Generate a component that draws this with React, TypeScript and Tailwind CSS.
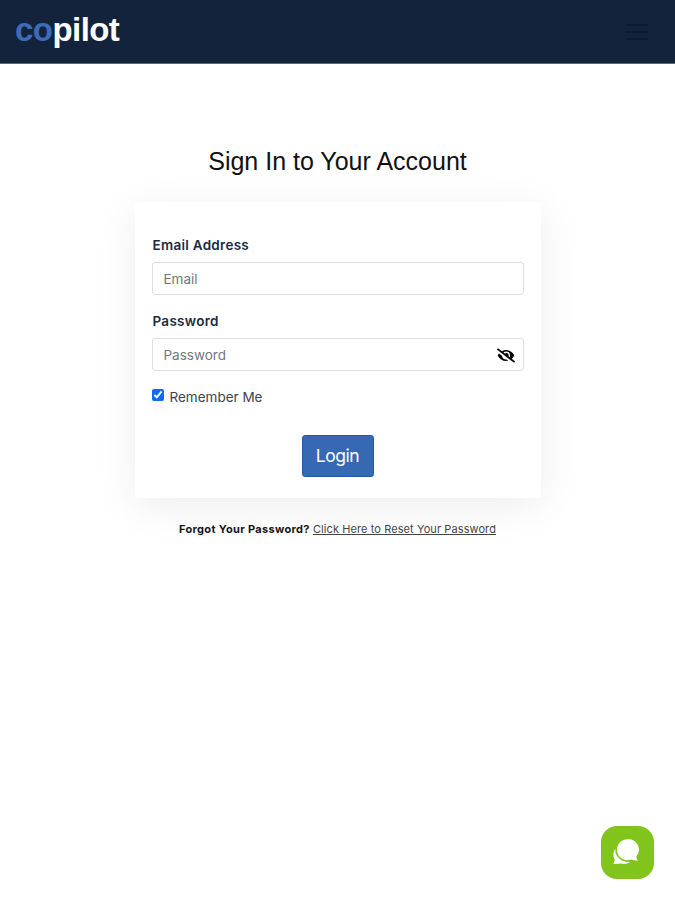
import React, { useState } from 'react';
import { FaEyeSlash } from 'react-icons/fa';

const Header: React.FC = () => (
  <header className="h-16 bg-[#14233c] border-b border-[#5d6878] pl-[15px] pr-[27px] flex items-center justify-between">
    <a
      href="#"
      className="font-['Liberation_Sans',Arial,sans-serif] text-[33px] leading-8 font-bold tracking-[-0.55px] text-white -mt-[3px]"
    >
      <span className="text-[#3d6bb8]">co</span>pilot
    </a>
    <button aria-label="Menu" className="w-[22px] flex flex-col gap-[5px]">
      <span className="h-0.5 w-full bg-[#0d1b2e]"></span>
      <span className="h-0.5 w-full bg-[#0d1b2e]"></span>
      <span className="h-0.5 w-full bg-[#0d1b2e]"></span>
    </button>
  </header>
);

const inputClass =
  'block w-full h-[33px] pl-[11px] pr-10 text-[13.5px] rounded-[3px] border border-[#dcdfe2] bg-white text-[#495057] placeholder-[#70777d] outline-none';

const labelClass = 'block pl-px text-[13.5px] leading-5 font-semibold tracking-[0.28px] text-[#1b2a45]';

const App: React.FC = () => {
  const [remember, setRemember] = useState(true);
  const [showPassword, setShowPassword] = useState(false);

  return (
    <div className="relative w-full h-[900px] overflow-hidden bg-white font-['Inter',sans-serif]">
      <Header />

      <main className="flex flex-col items-center">
        <h1 className="mt-[81px] font-['Liberation_Sans',Arial,sans-serif] text-[25px] leading-8 text-[#111] whitespace-nowrap">
          Sign In to Your Account
        </h1>

        {/* Login card */}
        <form
          onSubmit={e => e.preventDefault()}
          className="mt-[25px] w-[406px] h-[296px] bg-white rounded-[3px] px-[17px] pt-[33px] shadow-[0_8px_42px_rgba(0,0,0,0.075)]"
        >
          <label htmlFor="email" className={labelClass}>
            Email Address
          </label>
          <input id="email" type="email" placeholder="Email" className={`mt-[7px] ${inputClass}`} />

          <label htmlFor="password" className={`mt-4 ${labelClass}`}>
            Password
          </label>
          <div className="relative mt-[7px]">
            <input
              id="password"
              type={showPassword ? 'text' : 'password'}
              placeholder="Password"
              className={inputClass}
            />
            <button
              type="button"
              aria-label="Show password"
              onClick={() => setShowPassword(!showPassword)}
              className="absolute right-[9px] top-[10px] text-black"
            >
              <FaEyeSlash className="w-[18px] h-[15px]" />
            </button>
          </div>

          <label className="mt-4 flex items-center text-[13.5px] leading-5 text-[#3d444b]">
            <input
              type="checkbox"
              checked={remember}
              onChange={e => setRemember(e.target.checked)}
              className="w-[12px] h-[12px] mr-1.5 -mt-1 accent-[#0b6cf2]"
            />
            Remember Me
          </label>

          <div className="mt-7 flex justify-center">
            <button type="submit" className="w-[72px] h-[42px] rounded-[3px] border border-[#2459a8] bg-[#3768b3] text-[17.5px] tracking-[-0.45px] text-white">
              Login
            </button>
          </div>
        </form>

        <p className="relative mt-[23px] text-[11px] leading-4 text-[#444] whitespace-nowrap">
          <strong className="font-bold tracking-[0.33px] text-[#161616]">Forgot Your Password?</strong>{' '}
          <a href="#" className="underline tracking-[0.09px]">Click Here to Reset Your Password</a>
        </p>
      </main>

      {/* Chat launcher */}
      <button
        aria-label="Open chat"
        className="absolute left-[601px] top-[826px] w-[53px] h-[53px] rounded-[16px] bg-[#80c41c] flex items-center justify-center"
      >
        <svg viewBox="0 0 28 28" className="w-7 h-7 mr-[3px]" fill="#fff">
          <path d="M3.400 9.800c-.7 6 3.600 11.900 11.300 13.100 1.300.2 2.500.1 3.500-.2-2.200 2-5.400 2.700-9.100 1.700-2.600.4-5 .6-7.900.4.8-1.300 1.500-2.500 1.600-3.800C.700 17.200.900 13 3.400 9.800Z" />
          <path d="M15.300.200a10.500 10.500 0 1 0 3.600 20.400c2.400.7 4.700 1.200 7 1.100-.8-1.300-1.400-2.500-1.600-4.200A10.500 10.500 0 0 0 15.300.200Z" />
        </svg>
      </button>
    </div>
  );
};

export default App;
